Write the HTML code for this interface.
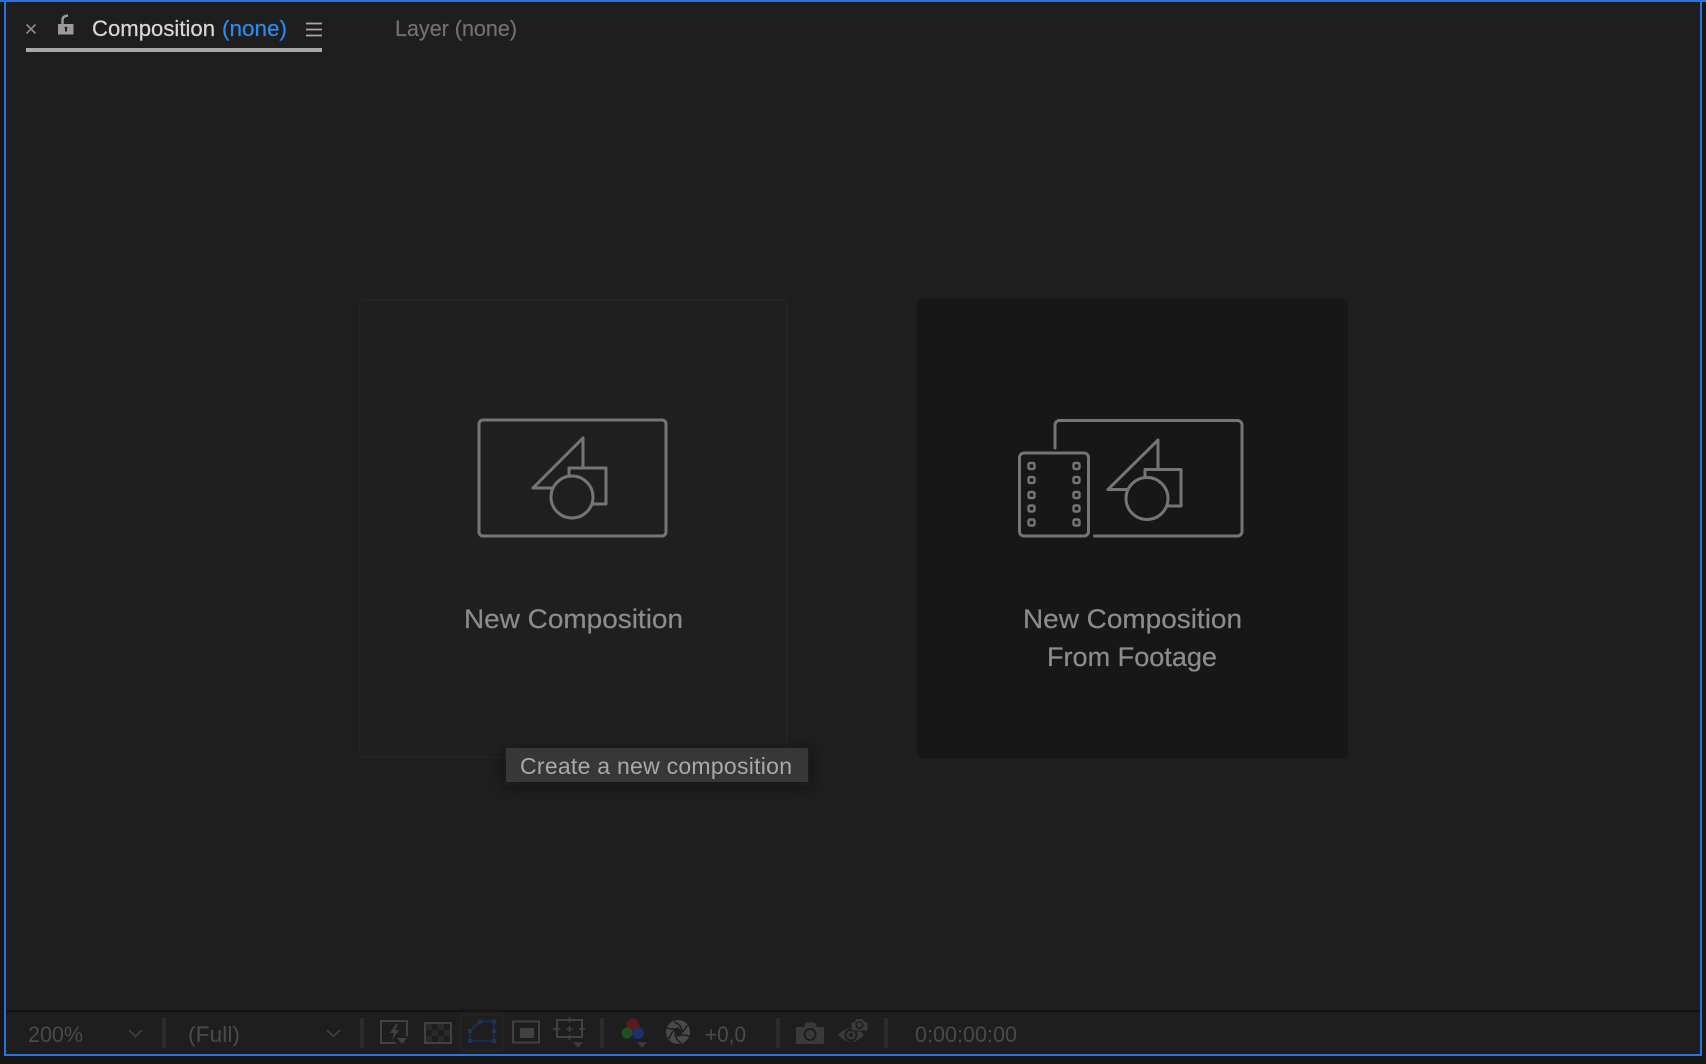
<!DOCTYPE html>
<html><head><meta charset="utf-8"><style>
html,body{margin:0;padding:0;background:#161616;width:1706px;height:1064px;overflow:hidden}
svg{display:block}
text{font-family:"Liberation Sans",sans-serif}
</style></head><body>
<svg width="1706" height="1064" viewBox="0 0 1706 1064" xmlns="http://www.w3.org/2000/svg">
<defs><filter id="s" x="-10%" y="-50%" width="120%" height="200%"><feGaussianBlur stdDeviation="6"/></filter></defs>
<rect width="1706" height="1064" fill="#161616"/>
<rect x="5" y="1" width="1696" height="1054" fill="#1e1e1e" stroke="#2a72de" stroke-width="2"/>
<rect x="0" y="0" width="1706" height="2" fill="#2a72de"/>
<!-- header -->
<path d="M26.500 24.500l9 9M35.500 24.500l-9 9" stroke="#8a8a8a" stroke-width="1.600" fill="none"/>
<rect x="58" y="24" width="15.500" height="10.500" rx="0.500" fill="#9a9a9a"/>
<path d="M62.500 24v-4q0-4 5.500-4.500" fill="none" stroke="#9a9a9a" stroke-width="2.400"/>
<path d="M64.500 27.500a1.700 1.700 0 0 1 3 0l-0.500 1.500v2.500h-2V29z" fill="#1e1e1e"/>
<text x="92" y="36" font-size="22" fill="#d8d8d8" stroke="#d8d8d8" stroke-width="0.200" textLength="123" lengthAdjust="spacingAndGlyphs">Composition</text>
<text x="222" y="36" font-size="22" fill="#2d8ceb" stroke="#2d8ceb" stroke-width="0.200" textLength="65" lengthAdjust="spacingAndGlyphs">(none)</text>
<path d="M306 23.500h16M306 29.500h16M306 35.500h16" stroke="#a8a8a8" stroke-width="1.700"/>
<rect x="26" y="48" width="296" height="4" fill="#a8a8a8"/>
<text x="395" y="36" font-size="22" fill="#717171" stroke="#717171" stroke-width="0.200" textLength="122" lengthAdjust="spacingAndGlyphs">Layer (none)</text>
<!-- cards -->
<rect x="359.500" y="299.500" width="428" height="458" rx="4" fill="#1f1f1f" stroke="#262626"/>
<rect x="917" y="299" width="431" height="459" rx="5" fill="#171717"/>
<g fill="none" stroke="#757575" stroke-width="3" stroke-linejoin="round" stroke-linecap="round">
<rect x="479" y="420" width="187" height="116" rx="4"/>
<path d="M583 438L533 488H553M583 438V468H569V476M583 468H606V504H593"/>
<circle cx="572" cy="497" r="21"/>
<path d="M1055 448V425a4.500 4.500 0 0 1 4.500-4.500H1237.500a4.500 4.500 0 0 1 4.500 4.500V531.500a4.500 4.500 0 0 1-4.500 4.500H1094.500"/>
<rect x="1019.500" y="453" width="69" height="83" rx="4.500"/>
<path d="M1158 440L1108 489.500H1128M1158 440V469.500H1145V477M1158 469.500H1181V506H1168"/>
<circle cx="1147" cy="498.500" r="21"/>
<g stroke-width="2.400">
<rect x="1028.500" y="463" width="6" height="6" rx="1.500"/><rect x="1073.500" y="463" width="6" height="6" rx="1.500"/>
<rect x="1028.500" y="477" width="6" height="6" rx="1.500"/><rect x="1073.500" y="477" width="6" height="6" rx="1.500"/>
<rect x="1028.500" y="492" width="6" height="6" rx="1.500"/><rect x="1073.500" y="492" width="6" height="6" rx="1.500"/>
<rect x="1028.500" y="505.500" width="6" height="6" rx="1.500"/><rect x="1073.500" y="505.500" width="6" height="6" rx="1.500"/>
<rect x="1028.500" y="519.500" width="6" height="6" rx="1.500"/><rect x="1073.500" y="519.500" width="6" height="6" rx="1.500"/>
</g>
</g>
<text x="464" y="628" font-size="27" fill="#8c8c8c" stroke="#8c8c8c" stroke-width="0.200" textLength="219" lengthAdjust="spacingAndGlyphs">New Composition</text>
<text x="1023" y="628" font-size="27" fill="#8c8c8c" stroke="#8c8c8c" stroke-width="0.200" textLength="219" lengthAdjust="spacingAndGlyphs">New Composition</text>
<text x="1047" y="666" font-size="27" fill="#8c8c8c" stroke="#8c8c8c" stroke-width="0.200" textLength="170" lengthAdjust="spacingAndGlyphs">From Footage</text>
<!-- tooltip -->
<rect x="504" y="750" width="306" height="36" fill="#0c0c0c" opacity="0.45" filter="url(#s)"/>
<rect x="506" y="748" width="302" height="34" fill="#373737"/>
<text x="520" y="774" font-size="23" fill="#a9a9a9" textLength="272" lengthAdjust="spacing">Create a new composition</text>
<!-- toolbar -->
<rect x="6" y="1010" width="1694" height="2" fill="#141414"/>
<g fill="#2b2b2b">
<rect x="162" y="1018" width="4" height="30"/><rect x="360" y="1018" width="4" height="30"/>
<rect x="600" y="1018" width="4" height="30"/><rect x="776" y="1018" width="4" height="30"/><rect x="884" y="1018" width="4" height="30"/>
</g>
<g font-size="22" fill="#4a4a4a">
<text x="28" y="1042" textLength="55" lengthAdjust="spacingAndGlyphs">200%</text>
<text x="188" y="1042" textLength="52" lengthAdjust="spacingAndGlyphs">(Full)</text>
<text x="705" y="1042" textLength="41" lengthAdjust="spacingAndGlyphs">+0,0</text>
<text x="915" y="1042" textLength="102" lengthAdjust="spacingAndGlyphs">0:00:00:00</text>
</g>
<path d="M129 1030l6.500 6.500 6.500-6.500M327 1030l6.500 6.500 6.500-6.500" fill="none" stroke="#3e3e3e" stroke-width="1.800"/>
<g fill="none" stroke="#414141" stroke-width="2">
<path d="M407 1036V1021H381V1043H396"/>
<rect x="425" y="1023" width="26" height="20"/>
<rect x="513" y="1021.500" width="26" height="21"/>
<path d="M557 1020H582V1037H557Z" />
<path d="M569.500 1017V1022M569.500 1035V1040M553 1029H560M579 1029H585M569.500 1026V1032M566.500 1029H572.500" stroke-width="1.600"/>
</g>
<path d="M396 1024l-6 9h4l-2 7 7-10h-4l3-6z" fill="#414141"/>
<path d="M397 1038h10l-5 6z" fill="#414141"/>
<path d="M426 1024h6v6h-6zM438 1024h6v6h-6zM432 1030h6v6h-6zM444 1030h6v6h-6zM426 1036h6v6h-6zM438 1036h6v6h-6z" fill="#292929"/>
<rect x="460.500" y="1014.500" width="42" height="36" rx="4" fill="none" stroke="#252525" stroke-width="1.500"/>
<path d="M470 1031L480 1021.500H494V1041H470Z" fill="none" stroke="#1b2c48" stroke-width="2.400"/>
<path d="M468 1029h4v4h-4zM478 1019.500h4v4h-4zM492 1019.500h4v4h-4zM492 1039h4v4h-4zM468 1039h4v4h-4zM492 1029h4v4h-4z" fill="#1f3558"/>
<rect x="520" y="1028" width="14" height="10" fill="#414141"/>
<path d="M573 1042h10l-5 6zM637 1042h10l-5 6z" fill="#3a3a3a"/>
<circle cx="633" cy="1025" r="6.500" fill="#5a1a1c"/>
<circle cx="627" cy="1033" r="5.500" fill="#1e4f22"/>
<circle cx="638" cy="1033" r="6" fill="#1f2f66"/>
<circle cx="678" cy="1032" r="12" fill="#4a4a4a"/>
<g stroke="#1e1e1e" stroke-width="1.600" fill="none">
<path d="M674 1022Q681 1024 682 1031M687 1025Q685 1031 679 1034M689 1036Q683 1034 677 1036M681 1043Q676 1040 675 1034M669 1039Q671 1032 676 1029M667 1028Q673 1030 679 1028"/>
</g>
<circle cx="678" cy="1032" r="3.500" fill="#1e1e1e"/>
<path d="M796 1027h8l2-4.500h9l2 4.500h7v17h-28z" fill="#3a3a3a"/>
<circle cx="810" cy="1034.500" r="5.500" fill="#3a3a3a" stroke="#1e1e1e" stroke-width="2"/>
<path d="M838 1035Q851 1021 864 1035Q851 1049 838 1035Z" fill="#3a3a3a"/>
<circle cx="851" cy="1035" r="5.500" fill="#3a3a3a" stroke="#1e1e1e" stroke-width="2"/>
<circle cx="851" cy="1035" r="2" fill="#1e1e1e"/>
<path d="M851 1021.500h3.500l1.500-3h7l1.500 3h3.500v9.500h-17z" fill="#3a3a3a" stroke="#1e1e1e" stroke-width="1"/>
<circle cx="859.500" cy="1025" r="3.300" fill="#3a3a3a" stroke="#1e1e1e" stroke-width="1.500"/>
</svg>
</body></html>
